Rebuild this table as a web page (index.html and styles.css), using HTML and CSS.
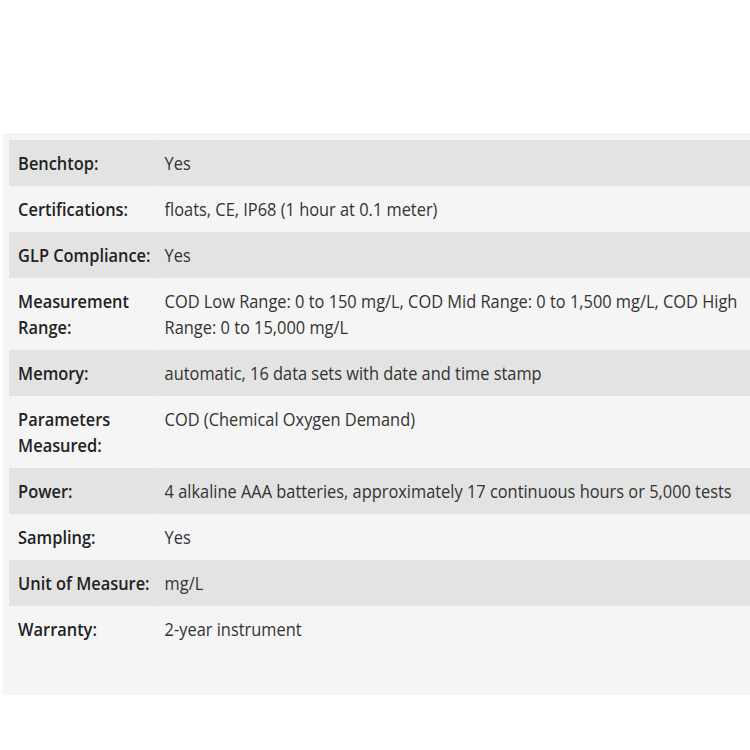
FILE: index.html
```html
<!DOCTYPE html>
<html>
<head>
<meta charset="utf-8">
<link rel="stylesheet" href="styles.css">
</head>
<body>
<div class="panel">
  <table class="specs">
    <tr class="dark"><th>Benchtop:</th><td>Yes</td></tr>
    <tr><th>Certifications:</th><td>floats, CE, IP68 (1 hour at 0.1 meter)</td></tr>
    <tr class="dark"><th>GLP Compliance:</th><td>Yes</td></tr>
    <tr><th>Measurement Range:</th><td>COD Low Range: 0 to 150 mg/L, COD Mid Range: 0 to 1,500 mg/L, COD High Range: 0 to 15,000 mg/L</td></tr>
    <tr class="dark"><th>Memory:</th><td>automatic, 16 data sets with date and time stamp</td></tr>
    <tr><th>Parameters Measured:</th><td>COD (Chemical Oxygen Demand)</td></tr>
    <tr class="dark"><th>Power:</th><td>4 alkaline AAA batteries, approximately 17 continuous hours or 5,000 tests</td></tr>
    <tr><th>Sampling:</th><td>Yes</td></tr>
    <tr class="dark"><th>Unit of Measure:</th><td>mg/L</td></tr>
    <tr><th>Warranty:</th><td>2-year instrument</td></tr>
  </table>
</div>
</body>
</html>
```
FILE: styles.css
```css
html, body {
  margin: 0;
  padding: 0;
  background: #ffffff;
  overflow: hidden;
}
body {
  padding: 133px 0 0 3px;
  font-family: "Open Sans", "Liberation Sans", sans-serif;
}
.panel {
  width: 760px;
  background: #f5f5f5;
  padding: 7px 0 43px 6px;
}
.specs {
  width: 835px;
  border-collapse: collapse;
  font-size: 18px;
  line-height: 26px;
  transform: scaleX(0.91);
  transform-origin: 0 0;
}
.specs th, .specs td {
  text-align: left;
  vertical-align: top;
  padding: 10px 0 10px 10px;
}
.specs th {
  width: 151px;
  font-weight: 600;
  color: #222;
}
.specs td {
  color: #333;
  font-weight: 400;
  padding-right: 8px;
}
.specs tr.dark {
  background: #e3e3e3;
}
```
